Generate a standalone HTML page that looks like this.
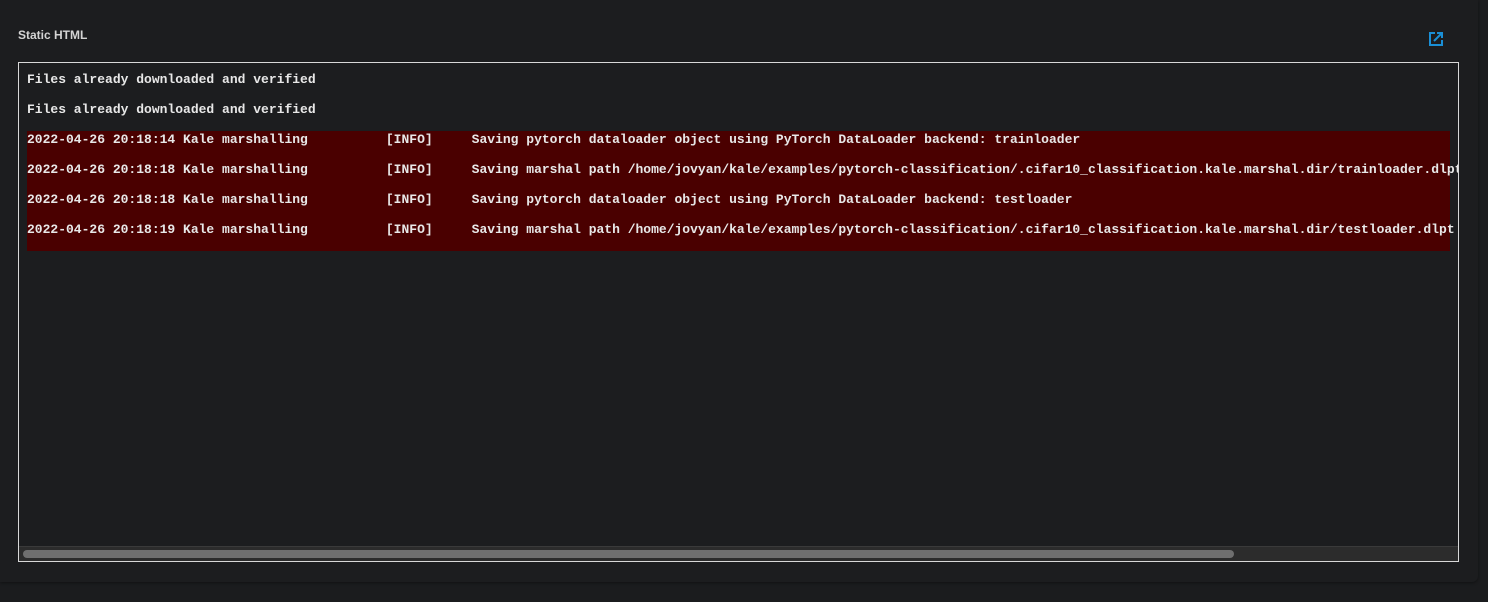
<!DOCTYPE html>
<html><head><style>
html,body{margin:0;padding:0;background:#1b1c1e;width:1488px;height:602px;overflow:hidden;}
.panel{position:absolute;left:0;top:0;width:1478px;height:582px;background:#1c1d1f;border-radius:0 0 6px 0;box-shadow:0 1px 3px rgba(0,0,0,.4);}
.title{position:absolute;left:18px;top:28px;font:bold 12px "Liberation Sans",sans-serif;color:#d4d4d4;}
.icon{position:absolute;left:1428px;top:31px;}
.frame{position:absolute;left:18px;top:62px;width:1439px;height:498px;border:1px solid #d8d8d8;overflow:hidden;background:#1c1d1f;}
.line{position:absolute;left:8px;font:bold 13px "Liberation Mono",monospace;color:#e8e8e8;white-space:pre;line-height:16px;}
.red{position:absolute;left:8px;top:68px;width:1423px;height:120px;background:#4a0000;}
.track{position:absolute;left:0;top:483px;width:1439px;height:15px;background:#2c2c2c;border-top:1px solid #3a3a3a;}
.thumb{position:absolute;left:4px;top:3px;width:1211px;height:8px;background:#6f6f6f;border-radius:4px;}
</style></head><body>
<div class="panel"></div>
<div class="title">Static HTML</div>
<svg class="icon" width="16" height="16" viewBox="0 0 16 16"><path d="M7 2H2v12h12V9" fill="none" stroke="#1a8fd6" stroke-width="2"/><path d="M6 10L13 3M9 2h5v5" fill="none" stroke="#1a8fd6" stroke-width="2"/></svg>
<div class="frame">
<div class="red"></div>
<div class="line" style="top:9px">Files already downloaded and verified</div>
<div class="line" style="top:39px">Files already downloaded and verified</div>
<div class="line" style="top:69px">2022-04-26 20:18:14 Kale marshalling          [INFO]     Saving pytorch dataloader object using PyTorch DataLoader backend: trainloader</div>
<div class="line" style="top:99px">2022-04-26 20:18:18 Kale marshalling          [INFO]     Saving marshal path /home/jovyan/kale/examples/pytorch-classification/.cifar10_classification.kale.marshal.dir/trainloader.dlpt</div>
<div class="line" style="top:129px">2022-04-26 20:18:18 Kale marshalling          [INFO]     Saving pytorch dataloader object using PyTorch DataLoader backend: testloader</div>
<div class="line" style="top:159px">2022-04-26 20:18:19 Kale marshalling          [INFO]     Saving marshal path /home/jovyan/kale/examples/pytorch-classification/.cifar10_classification.kale.marshal.dir/testloader.dlpt</div>
<div class="track"><div class="thumb"></div></div>
</div>
</body></html>
